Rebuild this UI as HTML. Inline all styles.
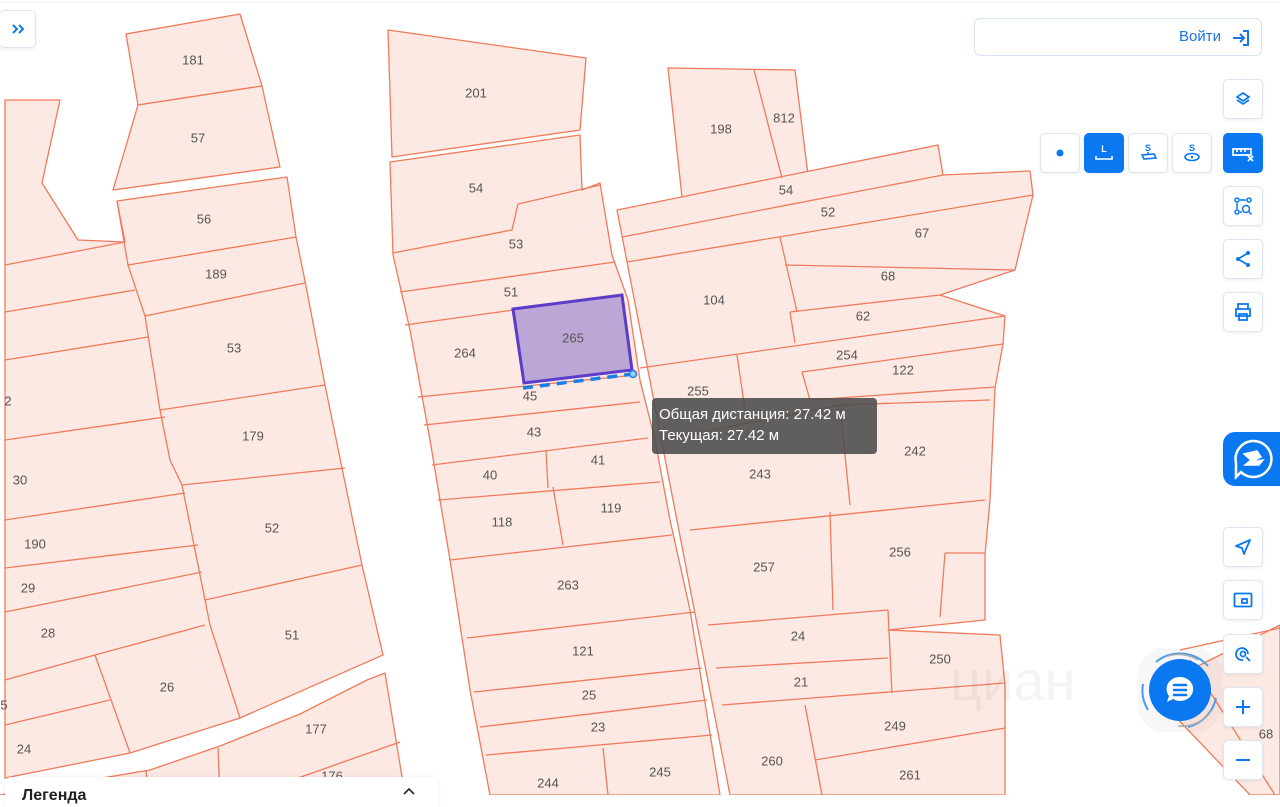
<!DOCTYPE html>
<html><head><meta charset="utf-8"><style>
body{margin:0;width:1280px;height:795px;overflow:hidden;background:#fff;font-family:"Liberation Sans","DejaVu Sans",sans-serif;position:relative}
svg.map{position:absolute;left:0;top:0}
.lb{font:13px "Liberation Sans",sans-serif;fill:#555;text-anchor:middle;dominant-baseline:middle}
.btn{position:absolute;width:38px;height:38px;background:#fff;border:1px solid #dde6f2;border-radius:5px;box-shadow:0 1px 3px rgba(0,0,0,.08);display:flex;align-items:center;justify-content:center}
.btn.on{background:#0a78f0;border-color:#0a78f0}
</style></head><body>
<svg class="map" width="1280" height="795" viewBox="0 0 1280 795">
<line x1="0" y1="2" x2="1280" y2="2" stroke="#eee"/>
<g fill="#fde9e3" stroke="#f07a5c" stroke-width="1.3" stroke-linejoin="round">
<polygon points="126,34 240,14 262,86 138,105"/>
<polygon points="138,105 262,86 280,167 113,190"/>
<polygon points="5,100 60,100 42,183 78,240 125,242 117,201 287,177 296,237 305,281 325,385 342,468 362,565 383,655 240,718 130,753 5,778"/>
<polygon points="0,795 150,770 220,746 300,714 367,680 385,673 405,795"/>
<polygon points="388,30 586,58 580,130 392,157"/>
<polygon points="390,162 580,135 582,190 600,183 612,255 628,300 640,380 655,440 670,520 690,610 720,795 490,795 470,690 450,560 430,440 410,330 393,255"/>
<polygon points="668,68 795,70 808,175 682,197"/>
<polygon points="617,210 938,145 943,175 1030,171 1033,195 1015,270 940,295 1005,316 1003,344 995,388 990,500 985,555 985,620 888,630 1000,635 1005,685 1005,795 730,795"/>
<polygon points="1150,690 1280,625 1280,795 1250,795"/>
</g>
<g fill="none" stroke="#f07a5c" stroke-width="1.3">
<polyline points="117,201 128,265 145,316 160,410 170,460 182,485 205,600 210,625 240,718"/>
<line x1="128" y1="265" x2="296" y2="237"/><line x1="145" y1="316" x2="305" y2="283"/>
<line x1="160" y1="410" x2="325" y2="385"/><line x1="182" y1="485" x2="345" y2="468"/>
<line x1="205" y1="600" x2="362" y2="565"/>
<line x1="5" y1="265" x2="125" y2="242"/><line x1="5" y1="312" x2="135" y2="290"/>
<line x1="5" y1="360" x2="148" y2="337"/><line x1="5" y1="440" x2="165" y2="417"/>
<line x1="5" y1="520" x2="185" y2="493"/><line x1="5" y1="568" x2="198" y2="545"/>
<line x1="5" y1="612" x2="202" y2="572"/><line x1="5" y1="680" x2="95" y2="655"/>
<polyline points="95,655 205,625"/><line x1="95" y1="655" x2="130" y2="753"/>
<line x1="5" y1="725" x2="110" y2="700"/>
<line x1="220" y1="795" x2="218" y2="748"/><line x1="250" y1="795" x2="400" y2="742"/>
<line x1="148" y1="795" x2="146" y2="770"/>
<polyline points="393,253 512,230 518,204 600,185"/>
<line x1="400" y1="292" x2="615" y2="262"/><line x1="405" y1="325" x2="622" y2="295"/>
<line x1="418" y1="397" x2="635" y2="375"/><line x1="424" y1="425" x2="640" y2="402"/>
<line x1="432" y1="465" x2="648" y2="438"/><line x1="438" y1="500" x2="660" y2="482"/>
<line x1="546" y1="450" x2="548" y2="488"/><line x1="553" y1="487" x2="563" y2="545"/>
<line x1="450" y1="560" x2="672" y2="535"/><line x1="467" y1="638" x2="695" y2="612"/>
<line x1="474" y1="692" x2="702" y2="668"/><line x1="480" y1="727" x2="707" y2="700"/>
<line x1="486" y1="755" x2="712" y2="735"/><line x1="603" y1="748" x2="608" y2="795"/>
<line x1="754" y1="70" x2="782" y2="178"/>
<line x1="622" y1="237" x2="943" y2="175"/><line x1="627" y1="262" x2="1033" y2="195"/>
<line x1="780" y1="237" x2="797" y2="312"/><line x1="785" y1="265" x2="1015" y2="270"/>
<line x1="790" y1="312" x2="940" y2="295"/><line x1="640" y1="368" x2="1005" y2="316"/>
<line x1="790" y1="312" x2="795" y2="343"/>
<line x1="802" y1="372" x2="1003" y2="344"/><line x1="810" y1="400" x2="995" y2="387"/>
<line x1="802" y1="372" x2="810" y2="400"/>
<line x1="737" y1="355" x2="745" y2="410"/><line x1="660" y1="440" x2="840" y2="405"/>
<line x1="840" y1="405" x2="990" y2="400"/><line x1="840" y1="405" x2="850" y2="505"/>
<line x1="690" y1="530" x2="985" y2="500"/><line x1="830" y1="512" x2="833" y2="610"/>
<polyline points="945,553 985,553"/><line x1="945" y1="553" x2="940" y2="617"/>
<line x1="708" y1="625" x2="888" y2="610"/><line x1="888" y1="610" x2="892" y2="693"/>
<line x1="716" y1="668" x2="888" y2="658"/><line x1="722" y1="705" x2="1005" y2="683"/>
<line x1="805" y1="705" x2="822" y2="795"/><line x1="815" y1="760" x2="1005" y2="728"/>
<line x1="1180" y1="650" x2="1280" y2="628"/><line x1="1190" y1="660" x2="1275" y2="795"/>
</g>
<polygon points="513,309 622,295 632,370 524,383" fill="#bba6d6" stroke="#5a3dc8" stroke-width="3"/>
<line x1="523" y1="388" x2="633" y2="374" stroke="#1a7fe8" stroke-width="3.5" stroke-dasharray="10,7"/>
<circle cx="633" cy="374" r="3.5" fill="#9cc8f5" stroke="#1a7fe8" stroke-width="1.5"/>
<g class="lb">
<text x="193" y="61">181</text><text x="198" y="139">57</text><text x="204" y="220">56</text><text x="216" y="275">189</text><text x="234" y="349">53</text><text x="253" y="437">179</text><text x="272" y="529">52</text><text x="292" y="636">51</text><text x="167" y="688">26</text><text x="316" y="730">177</text><text x="332" y="777">176</text><text x="8" y="402">2</text><text x="20" y="481">30</text><text x="35" y="545">190</text><text x="28" y="589">29</text><text x="48" y="634">28</text><text x="4" y="706">5</text><text x="24" y="750">24</text>
<text x="476" y="94">201</text><text x="476" y="189">54</text><text x="516" y="245">53</text><text x="511" y="293">51</text><text x="465" y="354">264</text><text x="573" y="339">265</text><text x="530" y="397">45</text><text x="534" y="433">43</text><text x="490" y="476">40</text><text x="598" y="461">41</text><text x="502" y="523">118</text><text x="611" y="509">119</text><text x="568" y="586">263</text><text x="583" y="652">121</text><text x="589" y="696">25</text><text x="598" y="728">23</text><text x="548" y="784">244</text><text x="660" y="773">245</text>
<text x="721" y="130">198</text><text x="784" y="119">812</text><text x="786" y="191">54</text><text x="828" y="213">52</text><text x="922" y="234">67</text><text x="888" y="277">68</text><text x="714" y="301">104</text><text x="863" y="317">62</text><text x="847" y="356">254</text><text x="903" y="371">122</text><text x="698" y="392">255</text><text x="915" y="452">242</text><text x="760" y="475">243</text><text x="764" y="568">257</text><text x="900" y="553">256</text><text x="798" y="637">24</text><text x="940" y="660">250</text><text x="801" y="683">21</text><text x="895" y="727">249</text><text x="772" y="762">260</text><text x="910" y="776">261</text><text x="1266" y="735">68</text>
</g>
<text x="950" y="700" font-size="56" fill="#000" opacity="0.04" font-family="Liberation Sans">циан</text>
</svg>

<div style="position:absolute;left:652px;top:398px;width:225px;height:56px;background:rgba(75,75,75,.88);border-radius:4px;color:#fff;font-size:15px;line-height:21px;padding:6px 0 0 7px;box-sizing:border-box">Общая дистанция: 27.42 м<br>Текущая: 27.42 м</div>

<div class="btn" style="left:-1px;top:10px;width:35px;height:36px"><svg width="14" height="12" viewBox="0 0 14 12"><path d="M2 2l4 4-4 4M8 2l4 4-4 4" fill="none" stroke="#0a78f0" stroke-width="2"/></svg></div>

<div style="position:absolute;left:974px;top:18px;width:288px;height:38px;border:1px solid #d6e3f5;border-radius:6px;background:#fff;box-sizing:border-box">
<span style="position:absolute;right:40px;top:9px;color:#1a73e8;font-size:15px">Войти</span>
<svg style="position:absolute;right:10px;top:9px" width="20" height="20" viewBox="0 0 20 20"><path d="M2 10h11M9 6l4 4-4 4M12 3h5v14h-5" fill="none" stroke="#1a73e8" stroke-width="2"/></svg></div>

<div class="btn" style="left:1223px;top:79px"><svg width="18" height="18" viewBox="0 0 18 18"><path d="M9 3l6 4-6 4-6-4z M3 10l6 4 6-4" fill="none" stroke="#0a78f0" stroke-width="1.7"/></svg></div>
<div class="btn" style="left:1040px;top:133px"><svg width="10" height="10"><circle cx="5" cy="5" r="3.5" fill="#0a78f0"/></svg></div>
<div class="btn on" style="left:1084px;top:133px"><svg width="22" height="20" viewBox="0 0 22 20"><text x="11" y="9" fill="#fff" font-size="9" text-anchor="middle" font-family="Liberation Sans" font-weight="bold">L</text><path d="M3 13v3h16v-3" fill="none" stroke="#fff" stroke-width="1.6"/></svg></div>
<div class="btn" style="left:1128px;top:133px"><svg width="22" height="22" viewBox="0 0 22 22"><text x="11" y="9" fill="#0a78f0" font-size="9" text-anchor="middle" font-family="Liberation Sans" font-weight="bold">S</text><path d="M5 13l12-1 2 4-12 1z" fill="none" stroke="#0a78f0" stroke-width="1.6"/><path d="M11 10v3" stroke="#0a78f0" stroke-width="1.5"/></svg></div>
<div class="btn" style="left:1172px;top:133px"><svg width="22" height="22" viewBox="0 0 22 22"><text x="11" y="9" fill="#0a78f0" font-size="9" text-anchor="middle" font-family="Liberation Sans" font-weight="bold">S</text><ellipse cx="11" cy="15" rx="7" ry="3.5" fill="none" stroke="#0a78f0" stroke-width="1.6"/><circle cx="11" cy="15" r="1.3" fill="#0a78f0"/></svg></div>
<div class="btn on" style="left:1223px;top:133px"><svg width="24" height="20" viewBox="0 0 24 20"><path d="M2 6h18v6H2z M6 6v3M10 6v3M14 6v3" fill="none" stroke="#fff" stroke-width="1.7"/><path d="M17 13l5 5M22 13l-5 5" stroke="#fff" stroke-width="1.8"/></svg></div>
<div class="btn" style="left:1223px;top:186px"><svg width="20" height="20" viewBox="0 0 20 20" fill="none" stroke="#0a78f0" stroke-width="1.5"><circle cx="4" cy="4" r="2"/><circle cx="16" cy="4" r="2"/><circle cx="4" cy="16" r="2"/><path d="M7 4h6M4 7v6M7 16h2"/><circle cx="13" cy="13" r="3.5"/><path d="M15.5 15.5l3 3"/></svg></div>
<div class="btn" style="left:1223px;top:239px"><svg width="18" height="18" viewBox="0 0 18 18"><path d="M14 3L4 9l10 6" fill="none" stroke="#0a78f0" stroke-width="1.7"/><circle cx="14" cy="3" r="2" fill="#0a78f0"/><circle cx="4" cy="9" r="2" fill="#0a78f0"/><circle cx="14" cy="15" r="2" fill="#0a78f0"/></svg></div>
<div class="btn" style="left:1223px;top:292px"><svg width="20" height="20" viewBox="0 0 20 20" fill="none" stroke="#0a78f0" stroke-width="1.8"><path d="M5 7V2h10v5M3 7h14v7H3zM6 12h8v6H6z"/></svg></div>

<div style="position:absolute;left:1223px;top:432px;width:60px;height:54px;background:#0a78f0;border-radius:12px 0 0 12px;display:flex;align-items:center;justify-content:center"><svg width="44" height="44" viewBox="0 0 44 44" fill="none" stroke="#fff" stroke-width="2.5"><path d="M22 4a18 18 0 1 1 -12 31l-5 5v-14A18 18 0 0 1 22 4z"/><path d="M13 17l13-3 4 6-10 5 12-2-4 5h-14l6-5z" fill="#fff" stroke-width="1.5"/></svg></div>

<div class="btn" style="left:1223px;top:527px"><svg width="18" height="18" viewBox="0 0 18 18"><path d="M16 2L2 8l6 2 2 6z" fill="none" stroke="#0a78f0" stroke-width="1.8" stroke-linejoin="round"/></svg></div>
<div class="btn" style="left:1223px;top:580px"><svg width="20" height="16" viewBox="0 0 20 16" fill="none" stroke="#0a78f0" stroke-width="1.8"><rect x="1.5" y="1.5" width="17" height="13" rx="1"/><rect x="9" y="7" width="5" height="4"/></svg></div>
<div class="btn" style="left:1223px;top:634px"><svg width="18" height="18" viewBox="0 0 18 18" fill="none" stroke="#0a78f0" stroke-width="1.8"><path d="M14 9A6 6 0 1 0 9 15"/><circle cx="9" cy="9" r="2.5"/><path d="M12 12l4 4"/></svg></div>
<div class="btn" style="left:1223px;top:687px"><svg width="18" height="18"><path d="M9 2v14M2 9h14" stroke="#0a78f0" stroke-width="2"/></svg></div>
<div class="btn" style="left:1223px;top:740px"><svg width="18" height="18"><path d="M2 9h14" stroke="#0a78f0" stroke-width="2"/></svg></div>

<svg style="position:absolute;left:1138px;top:648px" width="84" height="84" viewBox="0 0 84 84">
<circle cx="42" cy="42" r="48" fill="rgba(0,0,0,0.03)"/>
<path d="M18 14A38 38 0 0 1 70 18M78 50A38 38 0 0 1 50 79M10 62A38 38 0 0 1 5 36" fill="none" stroke="#4a9af0" stroke-width="2"/>
<path d="M30 8A36 36 0 0 1 60 12M74 62A36 36 0 0 1 40 78" fill="none" stroke="#aaa" stroke-width="1.5"/>
<circle cx="42" cy="42" r="31" fill="#0a78f0"/>
<path d="M42 29a13 12 0 1 1 -7 22l-6 3 2-6a13 12 0 0 1 11-19z" fill="#fff"/>
<path d="M36 37h12M36 42h12M36 47h12" stroke="#0a78f0" stroke-width="2.5" stroke-linecap="round"/>
</svg>

<div style="position:absolute;left:5px;top:777px;width:433px;height:30px;background:#fff;border-radius:6px 6px 0 0;box-shadow:0 0 4px rgba(0,0,0,.08)">
<span style="position:absolute;left:17px;top:10px;font-size:16px;font-weight:bold;color:#222">Легенда</span>
<svg style="position:absolute;left:398px;top:10px" width="12" height="8"><path d="M1 7l5-5 5 5" fill="none" stroke="#333" stroke-width="1.8"/></svg></div>
</body></html>
